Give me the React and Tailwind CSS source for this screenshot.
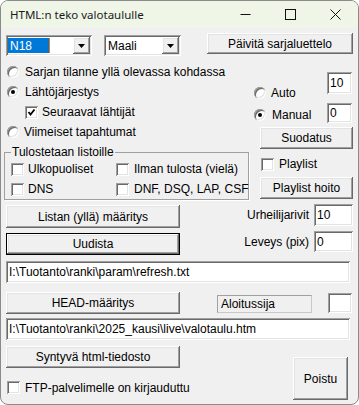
import React from "react";

const raised =
  "shadow-[inset_-1px_-1px_0_#696969,inset_1px_1px_0_#ffffff,inset_-2px_-2px_0_#a0a0a0,inset_2px_2px_0_#e3e3e3]";
const sunken =
  "shadow-[inset_1px_1px_0_#a0a0a0,inset_-1px_-1px_0_#ffffff,inset_2px_2px_0_#696969,inset_-2px_-2px_0_#e3e3e3]";

function Btn({ children, className = "" }) {
  return (
    <div
      className={`${raised} bg-[#f0f0f0] flex items-center justify-center text-black shrink-0 whitespace-nowrap ${className}`}
    >
      {children}
    </div>
  );
}

function Edit({ children, className = "" }) {
  return (
    <div
      className={`${sunken} bg-white flex items-center pl-[3px] text-black shrink-0 overflow-hidden whitespace-nowrap ${className}`}
    >
      {children}
    </div>
  );
}

function Radio({ checked }) {
  return (
    <div
      className={`${sunken} w-[12px] h-[12px] rounded-full bg-white flex items-center justify-center shrink-0`}
    >
      {checked && <div className="w-[4px] h-[4px] rounded-full bg-black" />}
    </div>
  );
}

function Check({ checked }) {
  return (
    <div className={`${sunken} w-[13px] h-[13px] bg-white shrink-0 flex items-center justify-center`}>
      {checked && (
        <svg width="13" height="13" viewBox="0 0 13 13">
          <polyline points="3.5,6 5.5,8.5 9.5,3.5" fill="none" stroke="black" strokeWidth="1.8" />
        </svg>
      )}
    </div>
  );
}

function Combo({ children, className = "" }) {
  return (
    <div className={`${sunken} bg-white h-[21px] flex items-center p-[2px] shrink-0 ${className}`}>
      <div className="flex-1 h-full flex items-center overflow-hidden">{children}</div>
      <div className={`${raised} bg-[#f0f0f0] w-[17px] h-full flex items-center justify-center`}>
        <svg width="7" height="4" viewBox="0 0 7 4">
          <polygon points="0,0 7,0 3.5,4" fill="black" />
        </svg>
      </div>
    </div>
  );
}

export default function App() {
  return (
    <div className="w-[359px] h-[405px] bg-white">
      <div className="w-[359px] h-[405px] border border-[#8a8a8a] rounded-[8px] overflow-hidden bg-[#f0f0f0] font-['Liberation_Sans',Arial,sans-serif] text-[12px] leading-[14px] text-black flex flex-col">
        {/* title bar */}
        <div className="h-[27px] bg-[#eff5e7] flex items-center shrink-0">
          <div className="pl-[9px] flex-1 font-['Noto_Sans',sans-serif] text-[11.5px] text-[#1a1a1a]">
            HTML:n teko valotaululle
          </div>
          <div className="w-[45px] h-full flex items-center justify-center">
            <svg width="11" height="11" viewBox="0 0 11 11">
              <line x1="0.5" y1="5.5" x2="10.5" y2="5.5" stroke="#111" strokeWidth="1" />
            </svg>
          </div>
          <div className="w-[45px] h-full flex items-center justify-center">
            <svg width="11" height="11" viewBox="0 0 11 11">
              <rect x="0.5" y="0.5" width="10" height="10" fill="none" stroke="#111" strokeWidth="1" />
            </svg>
          </div>
          <div className="w-[45px] h-full flex items-center justify-center">
            <svg width="11" height="11" viewBox="0 0 11 11">
              <line x1="0.5" y1="0.5" x2="10.5" y2="10.5" stroke="#111" strokeWidth="1" />
              <line x1="10.5" y1="0.5" x2="0.5" y2="10.5" stroke="#111" strokeWidth="1" />
            </svg>
          </div>
        </div>

        {/* row 1 */}
        <div className="flex items-start mt-[7px]">
          <Combo className="ml-[5px] w-[86px]">
            <div className="h-[15px] w-[41px] bg-[#0078d7] text-white flex items-center pl-[2px]">N18</div>
            <div className="w-[1px] h-[15px] bg-[#e07820]" />
          </Combo>
          <Combo className="ml-[12px] w-[77px]">
            <div className="pl-[2px]">Maali</div>
          </Combo>
          <Btn className="ml-[26px] w-[146px] h-[21px] -mt-[2px]">Päivitä sarjaluettelo</Btn>
        </div>

        {/* section 2 */}
        <div className="flex mt-[6px]">
          <div className="w-[249px] flex flex-col shrink-0">
            <div className="h-[20px] flex items-center ml-[6px] gap-[6px]">
              <Radio />
              <span>Sarjan tilanne yllä olevassa kohdassa</span>
            </div>
            <div className="h-[20px] flex items-center ml-[6px] gap-[6px]">
              <Radio checked />
              <span>Lähtöjärjestys</span>
            </div>
            <div className="h-[20px] flex items-center ml-[24px] gap-[4px]">
              <Check checked />
              <span>Seuraavat lähtijät</span>
            </div>
            <div className="h-[20px] flex items-center ml-[6px] gap-[5px]">
              <Radio />
              <span>Viimeiset tapahtumat</span>
            </div>
            <fieldset className="mt-[3px] ml-[3px] w-[245px] min-w-0 border border-[#a0a0a0] shadow-[1px_1px_0_#ffffff] whitespace-nowrap">
              <legend className="ml-[6px] px-[1px] leading-[14px]">Tulostetaan listoille</legend>
              <div className="flex h-[20px] items-center">
                <div className="w-[105px] shrink-0 flex items-center ml-[6px] gap-[4px]">
                  <Check />
                  <span>Ulkopuoliset</span>
                </div>
                <div className="flex items-center gap-[5px]">
                  <Check />
                  <span>Ilman tulosta (vielä)</span>
                </div>
              </div>
              <div className="flex h-[20px] items-center">
                <div className="w-[105px] shrink-0 flex items-center ml-[6px] gap-[4px]">
                  <Check />
                  <span>DNS</span>
                </div>
                <div className="flex items-center gap-[5px]">
                  <Check />
                  <span>DNF, DSQ, LAP, CSF</span>
                </div>
              </div>
            </fieldset>
          </div>

          <div className="flex flex-col mt-[10px]">
            <div className="ml-[4px] w-[98px] flex justify-between">
              <div className="pt-[14px] flex flex-col">
                <div className="h-[14px] flex items-center gap-[5px]">
                  <Radio />
                  <span>Auto</span>
                </div>
                <div className="h-[14px] mt-[8px] flex items-center gap-[6px]">
                  <Radio checked />
                  <span>Manual</span>
                </div>
              </div>
              <div className="flex flex-col">
                <Edit className="w-[25px] h-[22px]">10</Edit>
                <Edit className="w-[25px] h-[20px] mt-[9px]">0</Edit>
              </div>
            </div>
            <Btn className="mt-[4px] ml-[10px] w-[93px] h-[22px]">Suodatus</Btn>
            <div className="mt-[8px] ml-[11px] h-[14px] flex items-center gap-[5px]">
              <Check />
              <span>Playlist</span>
            </div>
            <Btn className="mt-[6px] ml-[10px] w-[93px] h-[22px]">Playlist hoito</Btn>
          </div>
        </div>

        {/* row A */}
        <div className="flex items-start mt-[4px]">
          <Btn className="ml-[5px] mt-[1px] w-[174px] h-[23px]">Listan (yllä) määritys</Btn>
          <div className="flex-1 flex items-center justify-end gap-[5px] mr-[5px]">
            <span>Urheilijarivit</span>
            <Edit className="w-[39px] h-[22px]">10</Edit>
          </div>
        </div>

        {/* row B */}
        <div className="flex items-start mt-[3px]">
          <div className="ml-[5px] mt-[2px] w-[174px] h-[22px] border border-black shrink-0">
            <Btn className="w-full h-full">Uudista</Btn>
          </div>
          <div className="flex-1 flex items-center justify-end gap-[5px] mr-[5px]">
            <span>Leveys (pix)</span>
            <Edit className="w-[39px] h-[21px]">0</Edit>
          </div>
        </div>

        <Edit className="mt-[6px] ml-[5px] w-[344px] h-[22px]">I:\Tuotanto\ranki\param\refresh.txt</Edit>

        {/* row C */}
        <div className="flex items-start mt-[9px]">
          <Btn className="ml-[5px] w-[174px] h-[22px]">HEAD-määritys</Btn>
          <div className="ml-[37px] mt-[3px] w-[95px] h-[18px] border border-[#a0a0a0] border-r-[#c8c8c8] border-b-[#c8c8c8] flex items-center pl-[3px] shrink-0">
            Aloitussija
          </div>
          <Edit className="ml-[16px] mt-[1px] w-[24px] h-[20px]" />
        </div>

        <Edit className="mt-[4px] ml-[5px] w-[344px] h-[22px]">I:\Tuotanto\ranki\2025_kausi\live\valotaulu.htm</Edit>

        {/* row D */}
        <div className="flex items-start mt-[6px]">
          <div className="w-[179px] shrink-0 flex flex-col">
            <Btn className="ml-[5px] w-[174px] h-[22px]">Syntyvä html-tiedosto</Btn>
            <div className="mt-[13px] ml-[6px] flex items-center gap-[5px] h-[13px] whitespace-nowrap">
              <Check />
              <span>FTP-palvelimelle on kirjauduttu</span>
            </div>
          </div>
          <Btn className="ml-[113px] mt-[11px] w-[55px] h-[43px]">Poistu</Btn>
        </div>
      </div>
    </div>
  );
}
